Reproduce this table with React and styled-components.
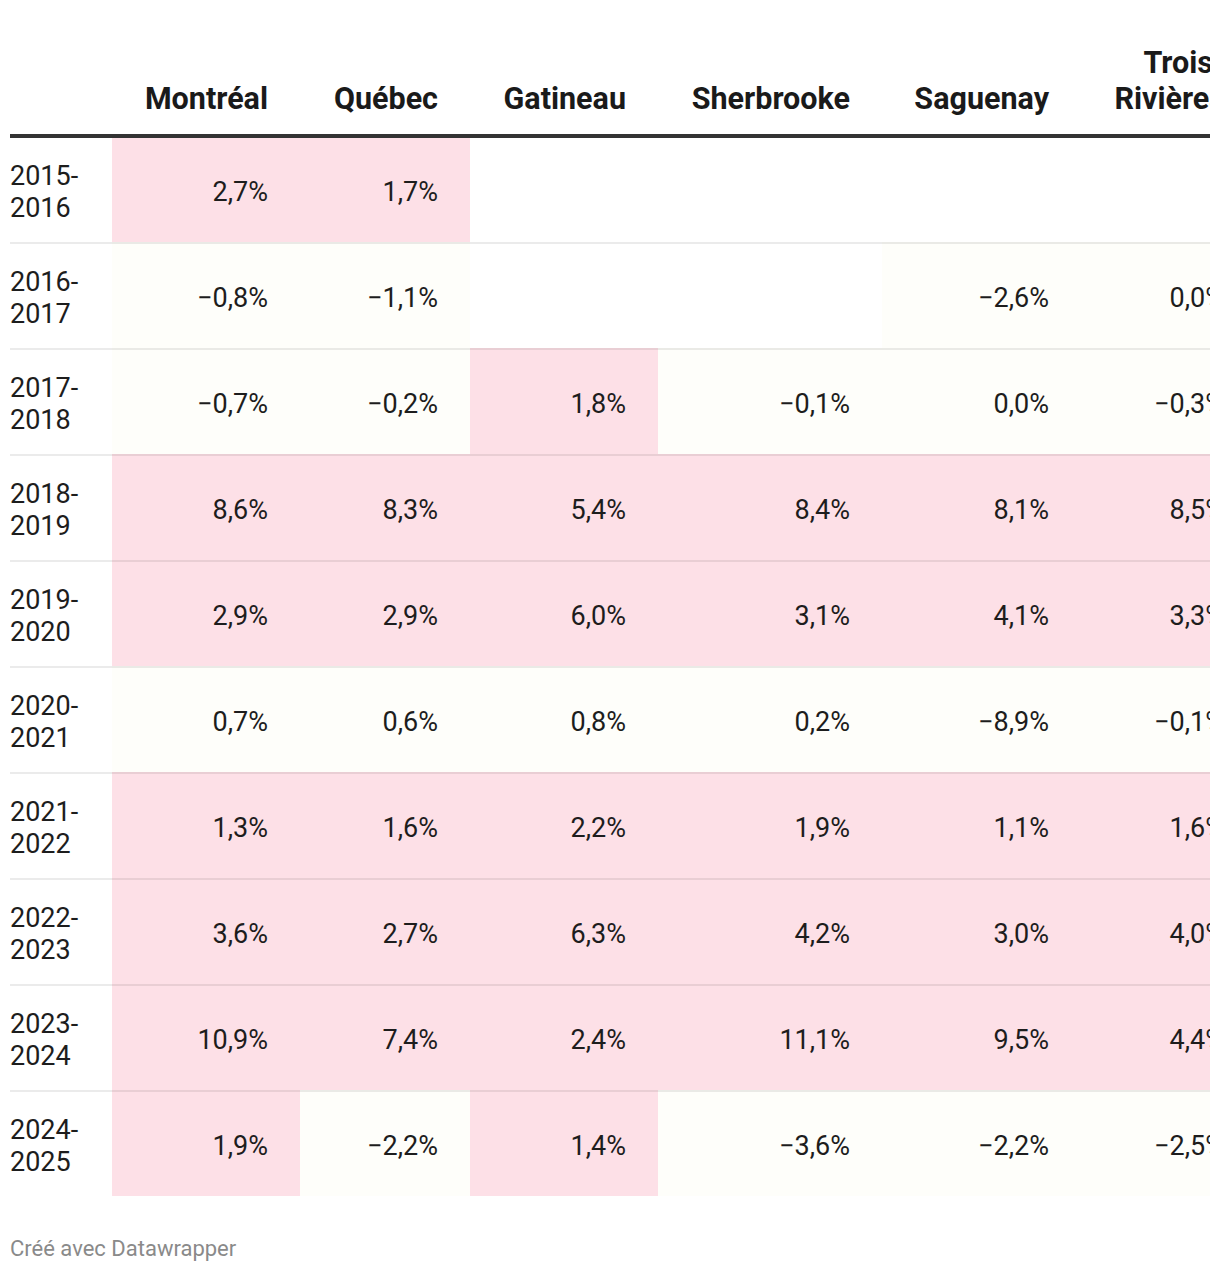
import React from "react";
import styled, { createGlobalStyle } from "styled-components";

const GlobalStyle = createGlobalStyle`
  body {
    margin: 0;
    background: #ffffff;
    font-family: Roboto, "Liberation Sans", sans-serif;
    color: #1d1d1d;
  }
`;

const columns = [
  { name: "Montréal", width: 188 },
  { name: "Québec", width: 170 },
  { name: "Gatineau", width: 188 },
  { name: "Sherbrooke", width: 224 },
  { name: "Saguenay", width: 199 },
  { name: "Trois-Rivières", width: 176 },
];

// null = pas de donnée
const rows = [
  ["2015-2016", [2.7, 1.7, null, null, null, null]],
  ["2016-2017", [-0.8, -1.1, null, null, -2.6, 0.0]],
  ["2017-2018", [-0.7, -0.2, 1.8, -0.1, 0.0, -0.3]],
  ["2018-2019", [8.6, 8.3, 5.4, 8.4, 8.1, 8.5]],
  ["2019-2020", [2.9, 2.9, 6.0, 3.1, 4.1, 3.3]],
  ["2020-2021", [0.7, 0.6, 0.8, 0.2, -8.9, -0.1]],
  ["2021-2022", [1.3, 1.6, 2.2, 1.9, 1.1, 1.6]],
  ["2022-2023", [3.6, 2.7, 6.3, 4.2, 3.0, 4.0]],
  ["2023-2024", [10.9, 7.4, 2.4, 11.1, 9.5, 4.4]],
  ["2024-2025", [1.9, -2.2, 1.4, -3.6, -2.2, -2.5]],
];

const format = (v) => {
  const s = Math.abs(v).toFixed(1).replace(".", ",") + "%";
  return v < 0 ? "\u2212" + s : s;
};

const tone = (v) => {
  if (v === null) return "none";
  return v > 1 ? "high" : "low";
};

const App = () => {
  return (
    <>
      <GlobalStyle />
      <Wrapper>
        <Frame>
          <Table>
            <colgroup>
              <col style={{ width: 102 }} />
              {columns.map((c) => (
                <col key={c.name} style={{ width: c.width }} />
              ))}
            </colgroup>
            <thead>
              <tr>
                <HeadCell />
                {columns.map((c) => (
                  <HeadCell key={c.name}>{c.name}</HeadCell>
                ))}
              </tr>
            </thead>
            <tbody>
              {rows.map(([label, values], i) => (
                <tr key={label}>
                  <LabelCell $first={i === 0}>{label}</LabelCell>
                  {values.map((v, j) => (
                    <ValueCell key={j} $first={i === 0} $tone={tone(v)}>
                      {v === null ? "" : format(v)}
                    </ValueCell>
                  ))}
                </tr>
              ))}
            </tbody>
          </Table>
        </Frame>
        <Footer>Créé avec Datawrapper</Footer>
      </Wrapper>
    </>
  );
};

export default App;

const Wrapper = styled.div`
  padding: 45px 10px 0;
  width: 1200px;
`;

const Frame = styled.div`
  width: 1200px;
  overflow: hidden;
`;

const Table = styled.table`
  table-layout: fixed;
  width: 1247px;
  border-collapse: separate;
  border-spacing: 0;
`;

const HeadCell = styled.th`
  font-size: 30.5px;
  font-weight: 700;
  line-height: 36px;
  color: #1a1a1a;
  text-align: right;
  vertical-align: bottom;
  padding: 0 32px 17px 0;
  border-bottom: 4px solid #333333;
  &:first-child {
    padding-right: 0;
  }
`;

const bg = {
  high: "#fde0e7",
  low: "#fefefa",
  none: "transparent",
};

const LabelCell = styled.td`
  font-size: 27px;
  line-height: 32px;
  padding: 22px 0 18px;
  text-align: left;
  vertical-align: middle;
  border-top: ${(p) => (p.$first ? "none" : "2px solid rgba(0, 0, 0, 0.08)")};
`;

const ValueCell = styled.td`
  font-size: 27px;
  line-height: 32px;
  padding: 22px 32px 18px 0;
  text-align: right;
  vertical-align: middle;
  white-space: nowrap;
  background: ${(p) => bg[p.$tone]};
  border-top: ${(p) => (p.$first ? "none" : "2px solid rgba(0, 0, 0, 0.08)")};
`;

const Footer = styled.div`
  margin-top: 40px;
  font-size: 22px;
  line-height: 26px;
  color: #8a8a8a;
`;
